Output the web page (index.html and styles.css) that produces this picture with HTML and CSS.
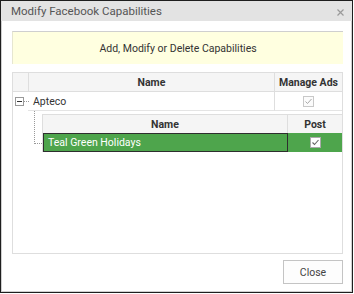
FILE: index.html
```html
<!DOCTYPE html>
<html>
<head>
<meta charset="utf-8">
<link rel="stylesheet" href="styles.css">
</head>
<body>
<div class="window">
  <div class="titlebar">
    <span class="title">Modify Facebook Capabilities</span>
    <svg class="xbtn" width="7" height="7" viewBox="0 0 7 7"><path d="M0.5 0.5L6.5 6.5M6.5 0.5L0.5 6.5" stroke="#9a9a9a" stroke-width="1.2"/></svg>
  </div>
  <div class="content">
    <div class="banner">Add, Modify or Delete Capabilities</div>
    <div class="grid">
      <div class="row head">
        <div class="c-exp"></div>
        <div class="c-name">Name</div>
        <div class="c-ads">Manage Ads</div>
      </div>
      <div class="row master">
        <div class="c-exp"><span class="toggle"></span><span class="hline"></span></div>
        <div class="c-name">Apteco</div>
        <div class="c-ads"><span class="chk dis"><svg width="9" height="9" viewBox="0 0 9 9"><path d="M1.5 4.5L3.5 6.5L7.5 2" fill="none" stroke="#a8a8a8" stroke-width="1"/></svg></span></div>
      </div>
      <div class="detail">
        <div class="tree"></div>
        <div class="subgrid">
          <div class="row head2">
            <div class="s-name">Name</div>
            <div class="s-post">Post</div>
          </div>
          <div class="row sel">
            <div class="s-name">Teal Green Holidays</div>
            <div class="s-post"><span class="chk on"><svg width="9" height="9" viewBox="0 0 9 9"><path d="M1.5 4.5L3.5 6.5L7.5 2" fill="none" stroke="#666" stroke-width="1.1"/></svg></span></div>
          </div>
        </div>
      </div>
    </div>
    <div class="footer">
      <button class="btn">Close</button>
    </div>
  </div>
</div>
</body>
</html>
```
FILE: styles.css
```css
html, body {
  margin: 0;
  padding: 0;
  background: #ffffff;
}
body {
  font-family: Roboto, "Open Sans", sans-serif;
  font-size: 10.5px;
  color: #333;
}
.window {
  width: 353px;
  height: 293px;
  box-sizing: border-box;
  border: 1px solid #1e1e1e;
  box-shadow: inset 0 0 0 1px #cfcfcf;
  display: flex;
  flex-direction: column;
  background: #fff;
}
.titlebar {
  height: 20px;
  background: #e3e3e3;
  display: flex;
  align-items: center;
  justify-content: space-between;
  padding: 0 8px 0 10px;
  flex: none;
}
.title {
  font-size: 11.5px;
  color: #555;
  line-height: 20px;
}
.xbtn {
  margin-top: 2px;
}
.content {
  flex: 1;
  display: flex;
  flex-direction: column;
  padding: 10px 9px 0 11px;
}
.banner {
  height: 32px;
  background: #ffffe0;
  border-top: 1px solid #cfcfcf;
  border-left: 1px solid #e6e6d0;
  display: flex;
  align-items: center;
  justify-content: center;
  font-size: 10.5px;
  color: #333;
}
.grid {
  margin-top: 8px;
  height: 180px;
  border: 1px solid #dedede;
  display: flex;
  flex-direction: column;
}
.row {
  display: flex;
}
.head {
  height: 18px;
  background: #f5f5f5;
  border-bottom: 1px solid #dedede;
  font-weight: bold;
  color: #333;
}
.head > div {
  display: flex;
  align-items: center;
  justify-content: center;
}
.c-exp {
  width: 15px;
  position: relative;
  flex: none;
}
.head .c-exp {
  border-right: 1px solid #dedede;
}
.c-name {
  flex: 1;
}
.c-ads {
  width: 67px;
  flex: none;
  border-left: 1px solid #dedede;
}
.master {
  height: 19px;
}
.master .c-name {
  border-bottom: 1px solid #e4e4e4;
  display: flex;
  align-items: center;
  padding-left: 5px;
}
.master .c-ads {
  border-bottom: 1px solid #e4e4e4;
  display: flex;
  align-items: center;
  justify-content: center;
}
.toggle {
  position: absolute;
  left: 2px;
  top: 5px;
  width: 7px;
  height: 7px;
  border: 1px solid #999;
  background: #fff;
}
.toggle::after {
  content: "";
  position: absolute;
  left: 1px;
  top: 3px;
  width: 5px;
  height: 1px;
  background: #333;
}
.hline {
  position: absolute;
  left: 11px;
  top: 9px;
  width: 5px;
  border-top: 1px dotted #999;
}
.chk {
  width: 9px;
  height: 9px;
  display: inline-flex;
  border: 1px solid #c8c8c8;
  background: #fbfbfb;
}
.chk.on {
  border-color: #aaa;
  background: #fff;
}
.detail {
  display: flex;
  margin-top: 3px;
}
.tree {
  width: 7px;
  margin-left: 21px;
  margin-top: -3px;
  height: 32px;
  border-left: 1px dotted #999;
  border-bottom: 1px dotted #999;
  flex: none;
}
.subgrid {
  flex: 1;
  border-left: 1px solid #dedede;
  display: flex;
  flex-direction: column;
}
.head2 {
  height: 18px;
  background: #f5f5f5;
  border-top: 1px solid #dedede;
  font-weight: bold;
}
.head2 > div {
  display: flex;
  align-items: center;
  justify-content: center;
}
.s-name {
  flex: 1;
}
.s-post {
  width: 54px;
  flex: none;
  border-left: 1px solid #dedede;
}
.sel {
  height: 19px;
  background: #4ea54c;
  color: #fff;
}
.sel .s-name {
  box-sizing: border-box;
  border: 1px solid #2e2e2e;
  display: flex;
  align-items: center;
  padding-left: 4px;
}
.sel .s-post {
  border-left: none;
  display: flex;
  align-items: center;
  justify-content: center;
}
.footer {
  display: flex;
  justify-content: flex-end;
  padding-top: 6px;
}
.btn {
  width: 60px;
  height: 24px;
  border: 1px solid #c4c4c4;
  background: #fdfdfd;
  font-family: Roboto, "Open Sans", sans-serif;
  font-size: 10.5px;
  color: #444;
  padding: 0;
}
```
